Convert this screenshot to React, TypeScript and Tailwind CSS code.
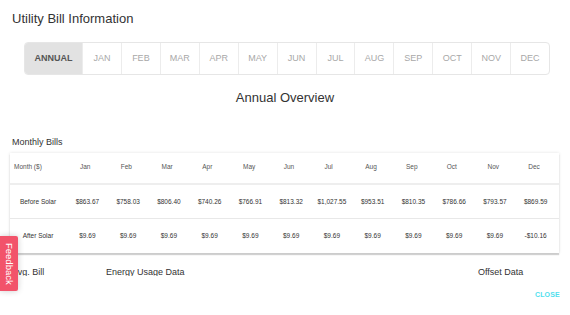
const tabs = ["ANNUAL", "JAN", "FEB", "MAR", "APR", "MAY", "JUN", "JUL", "AUG", "SEP", "OCT", "NOV", "DEC"];
const months = ["Jan", "Feb", "Mar", "Apr", "May", "Jun", "Jul", "Aug", "Sep", "Oct", "Nov", "Dec"];

const rows = [
  {
    label: "Before Solar",
    values: ["$863.67", "$758.03", "$806.40", "$740.26", "$766.91", "$813.32", "$1,027.55", "$953.51", "$810.35", "$786.66", "$793.57", "$869.59"],
  },
  {
    label: "After Solar",
    values: ["$9.69", "$9.69", "$9.69", "$9.69", "$9.69", "$9.69", "$9.69", "$9.69", "$9.69", "$9.69", "$9.69", "-$10.16"],
  },
];

const font = { fontFamily: '"Liberation Sans", Arial, sans-serif' };

function MonthTabs() {
  return (
    <div className="ml-[24px] mt-[15px] flex h-[33px] w-[526px] overflow-hidden rounded-[4px] border border-[#e6e6e6]">
      {tabs.map((t, i) => (
        <div
          key={t}
          className={`flex items-center justify-center text-[9px] ${
            i === 0
              ? "w-[57px] bg-[#e2e2e2] font-bold text-[#555]"
              : "flex-1 border-l border-[#ececec] text-[#a8a8a8]"
          }`}
        >
          {t}
        </div>
      ))}
    </div>
  );
}

function BillsTable() {
  return (
    <div className="ml-[10px] mt-[5px] w-[549px] bg-white shadow-[0_0_3px_rgba(0,0,0,0.12),0_2px_1px_rgba(0,0,0,0.16)]">
      <div className="grid h-[32px] grid-cols-[60px_repeat(12,1fr)] items-center border-b-2 border-[#eeeeee] pb-[2px] text-[6.5px] text-[#555]">
        <div className="pl-[4px]">Month ($)</div>
        {months.map((m) => (
          <div key={m} className="pl-[10px]">
            {m}
          </div>
        ))}
      </div>
      {rows.map((r, ri) => (
        <div
          key={r.label}
          className={`grid h-[34px] grid-cols-[60px_repeat(12,1fr)] items-center text-[6.5px] text-[#333] ${
            ri === 0 ? "border-b border-[#e8e8e8]" : ""
          }`}
        >
          <div className="pr-[4px] text-center">{r.label}</div>
          {r.values.map((v, i) => (
            <div key={i} className="pr-[6px] text-center">
              {v}
            </div>
          ))}
        </div>
      ))}
    </div>
  );
}

export default function App() {
  return (
    <div className="relative h-[315px] w-[570px] overflow-hidden bg-white" style={font}>
      <div className="h-[276px] overflow-hidden">
        <h1 className="pl-[12px] pt-[11px] text-[13px] leading-[16px] text-[#333]">Utility Bill Information</h1>
        <MonthTabs />
        <h2 className="mt-[15px] text-center text-[13px] leading-[16px] text-[#333]">Annual Overview</h2>
        <div className="mt-[30px] pl-[12px] text-[9px] leading-[12px] text-[#333]">Monthly Bills</div>
        <BillsTable />
        <div className="mt-[13px] flex text-[9px] leading-[12px] text-[#333]">
          <div className="w-[106px] pl-[12px]">Avg. Bill</div>
          <div className="w-[372px]">Energy Usage Data</div>
          <div>Offset Data</div>
        </div>
      </div>
      <div className="flex justify-end pr-[10px] pt-[14px]">
        <button className="text-[7px] font-bold tracking-[0.2px] text-[#52dfee]">CLOSE</button>
      </div>
      <div className="absolute left-0 top-[236px] flex h-[55px] w-[18px] items-center justify-center rounded-r-[2px] bg-[#f2536a] shadow-[0_0_6px_rgba(0,0,0,0.2)]">
        <span className="text-[9.5px] leading-none text-white [writing-mode:vertical-rl]">Feedback</span>
      </div>
    </div>
  );
}
